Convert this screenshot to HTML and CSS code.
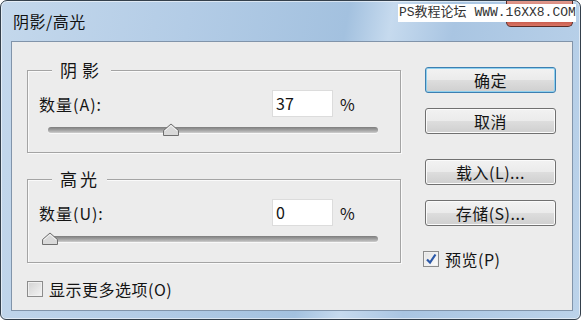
FILE: index.html
```html
<!DOCTYPE html>
<html lang="zh-CN">
  <head>
    <meta charset="UTF-8" />
    <title>阴影/高光</title>
    <link rel="stylesheet" href="styles.css">
  </head>
  <body>
    <div class="window">
      <div class="titlebar">
        <span class="title">阴影/高光</span>
        <span class="close"></span>
        <span class="watermark">PS教程论坛 WWW.16XX8.COM</span>
      </div>

      <div class="panel">
        <div class="left">
          <div class="group">
            <span class="group-title wide">阴影</span>
            <div class="row">
              <span class="label">数量(A):</span>
              <span class="input">37</span>
              <span class="unit">%</span>
            </div>
            <div class="slider">
              <div class="track"></div>
              <svg class="thumb" style="left: 114px" width="18" height="14" viewBox="0 0 18 14">
                <path d="M1.5 12.5 L1.5 7.5 L9 1 L16.5 7.5 L16.5 12.5 Z" fill="#d9d9d9" stroke="#6f6f6f" stroke-width="1" stroke-linejoin="round" />
                <path d="M3 7.8 L9 2.6 L15 7.8" fill="none" stroke="#f4f4f4" stroke-width="1" />
              </svg>
            </div>
          </div>

          <div class="group second">
            <span class="group-title">高光</span>
            <div class="row">
              <span class="label">数量(U):</span>
              <span class="input">0</span>
              <span class="unit">%</span>
            </div>
            <div class="slider">
              <div class="track"></div>
              <svg class="thumb" style="left: -7px" width="18" height="14" viewBox="0 0 18 14">
                <path d="M1.5 12.5 L1.5 7.5 L9 1 L16.5 7.5 L16.5 12.5 Z" fill="#d9d9d9" stroke="#6f6f6f" stroke-width="1" stroke-linejoin="round" />
                <path d="M3 7.8 L9 2.6 L15 7.8" fill="none" stroke="#f4f4f4" stroke-width="1" />
              </svg>
            </div>
          </div>

          <div class="check more">
            <span class="box"></span>
            <span>显示更多选项(O)</span>
          </div>
        </div>

        <div class="right">
          <button class="btn default">确定</button>
          <button class="btn cancel">取消</button>
          <button class="btn load">载入(L)...</button>
          <button class="btn save">存储(S)...</button>
          <div class="check preview">
            <span class="box checked">
              <svg width="12" height="12" viewBox="0 0 12 12">
                <path d="M2 6.5 L5 9.5 L10.5 1.5" fill="none" stroke="#2b58a8" stroke-width="2.2" />
              </svg>
            </span>
            <span>预览(P)</span>
          </div>
        </div>
      </div>
    </div>
  </body>
</html>
```

FILE: styles.css
```css
body {
  margin: 0;
  background-color: #fff;
  font-family: "Noto Sans CJK SC", "Liberation Sans", sans-serif;
  color: #141414;
}

.window {
  width: 581px;
  height: 320px;
  box-sizing: border-box;
  border: 1px solid #34404c;
  border-radius: 7px 7px 6px 6px;
  background: linear-gradient(100deg, #c4d8ec 0%, #b3cce6 30%, #a3c1df 55%, #c6daee 62%, #a9c5e2 72%, #bcd3ea 100%);
  box-shadow: inset 0 0 0 1px rgba(255, 255, 255, 0.55);
  overflow: hidden;
}

.titlebar {
  position: relative;
  height: 40px;
  display: flex;
  align-items: flex-start;
}

.title {
  margin: 9px 0 0 12px;
  font-size: 16px;
  line-height: 22px;
  letter-spacing: 0.5px;
  color: #111;
}

.close {
  margin-left: auto;
  margin-right: 7px;
  width: 67px;
  height: 26px;
  box-sizing: border-box;
  border: 1px solid #5a2a24;
  border-top: none;
  border-radius: 0 0 5px 5px;
  background: linear-gradient(#e09a8e, #cf6a5c 45%, #c24a3c 70%, #d77565);
}

.watermark {
  position: absolute;
  left: 397px;
  top: 3px;
  width: 178px;
  height: 18px;
  background-color: #fff;
  font-family: "Liberation Mono", "Noto Sans CJK SC", monospace;
  font-size: 13px;
  line-height: 18px;
  color: #333;
  white-space: nowrap;
  padding-left: 1px;
  box-sizing: border-box;
}

.panel {
  display: flex;
  height: 270px;
  box-sizing: border-box;
  margin: 0 7px 8px 10px;
  border: 1px solid #8194aa;
  background-color: #ececec;
}

.left {
  width: 374px;
  padding: 28px 0 0 15px;
}

.group {
  height: 83px;
  box-sizing: border-box;
  border: 1px solid #a4a4a4;
  box-shadow: 1px 1px 0 #fafafa, inset 1px 1px 0 #fafafa;
}

.group.second {
  margin-top: 26px;
  height: 84px;
}

.group-title {
  display: block;
  width: fit-content;
  margin: -12px 0 0 24px;
  padding: 0 7px 0 8px;
  background-color: #ececec;
  font-size: 17px;
  line-height: 22px;
  letter-spacing: 3px;
}

.group-title.wide {
  letter-spacing: 5px;
}

.row {
  display: flex;
  align-items: center;
  height: 27px;
  margin-top: 9px;
  padding-left: 11px;
}

.label {
  width: 233px;
  font-size: 16px;
  letter-spacing: 1px;
}

.input {
  width: 61px;
  height: 27px;
  box-sizing: border-box;
  border: 1px solid #dcdcdc;
  background-color: #fff;
  padding-left: 3px;
  font-size: 16px;
  line-height: 25px;
}

.unit {
  margin-left: 7px;
  font-size: 16px;
}

.slider {
  position: relative;
  height: 14px;
  margin: 6px 0 0 20px;
  width: 330px;
  display: flex;
  align-items: center;
}

.track {
  width: 100%;
  height: 6px;
  border-radius: 3px;
  background: linear-gradient(#7d7d7d, #9c9c9c 45%, #b9b9b9 80%, #d0d0d0);
  box-shadow: 0 1px 0 #f8f8f8;
}

.thumb {
  position: absolute;
  top: 0;
}

.check {
  display: flex;
  align-items: center;
  height: 18px;
  font-size: 16px;
  letter-spacing: 0.5px;
}

.check.more {
  margin-top: 17px;
}

.box {
  width: 16px;
  height: 16px;
  box-sizing: border-box;
  margin-right: 6px;
  border: 1px solid #8c8c8c;
  background: linear-gradient(135deg, #d2d2d2, #f4f4f4);
  box-shadow: inset 0 0 0 1px #f0f0f0;
  display: flex;
  align-items: center;
  justify-content: center;
}

.box.checked {
  background: linear-gradient(135deg, #e2e2e2, #fdfdfd);
}

.right {
  display: flex;
  flex-direction: column;
  align-items: flex-start;
  padding: 25px 0 0 24px;
}

.btn {
  width: 131px;
  height: 26px;
  box-sizing: border-box;
  border: 1px solid #707070;
  border-radius: 3px;
  background: linear-gradient(#f2f2f2, #ebebeb 48%, #dddddd 52%, #cfcfcf);
  box-shadow: inset 0 0 0 1px #fbfbfb;
  font-family: "Noto Sans CJK SC", "Liberation Sans", sans-serif;
  font-size: 16px;
  line-height: 22px;
  letter-spacing: 0.5px;
  color: #141414;
  padding: 0;
}

.btn.default {
  border-color: #3c7fb1;
  box-shadow: inset 0 0 0 1px #8fd0ee;
}

.btn.cancel {
  margin-top: 15px;
}

.btn.load {
  margin-top: 25px;
}

.btn.save {
  margin-top: 15px;
}

.check.preview {
  margin: 24px 0 0 -2px;
}
```
